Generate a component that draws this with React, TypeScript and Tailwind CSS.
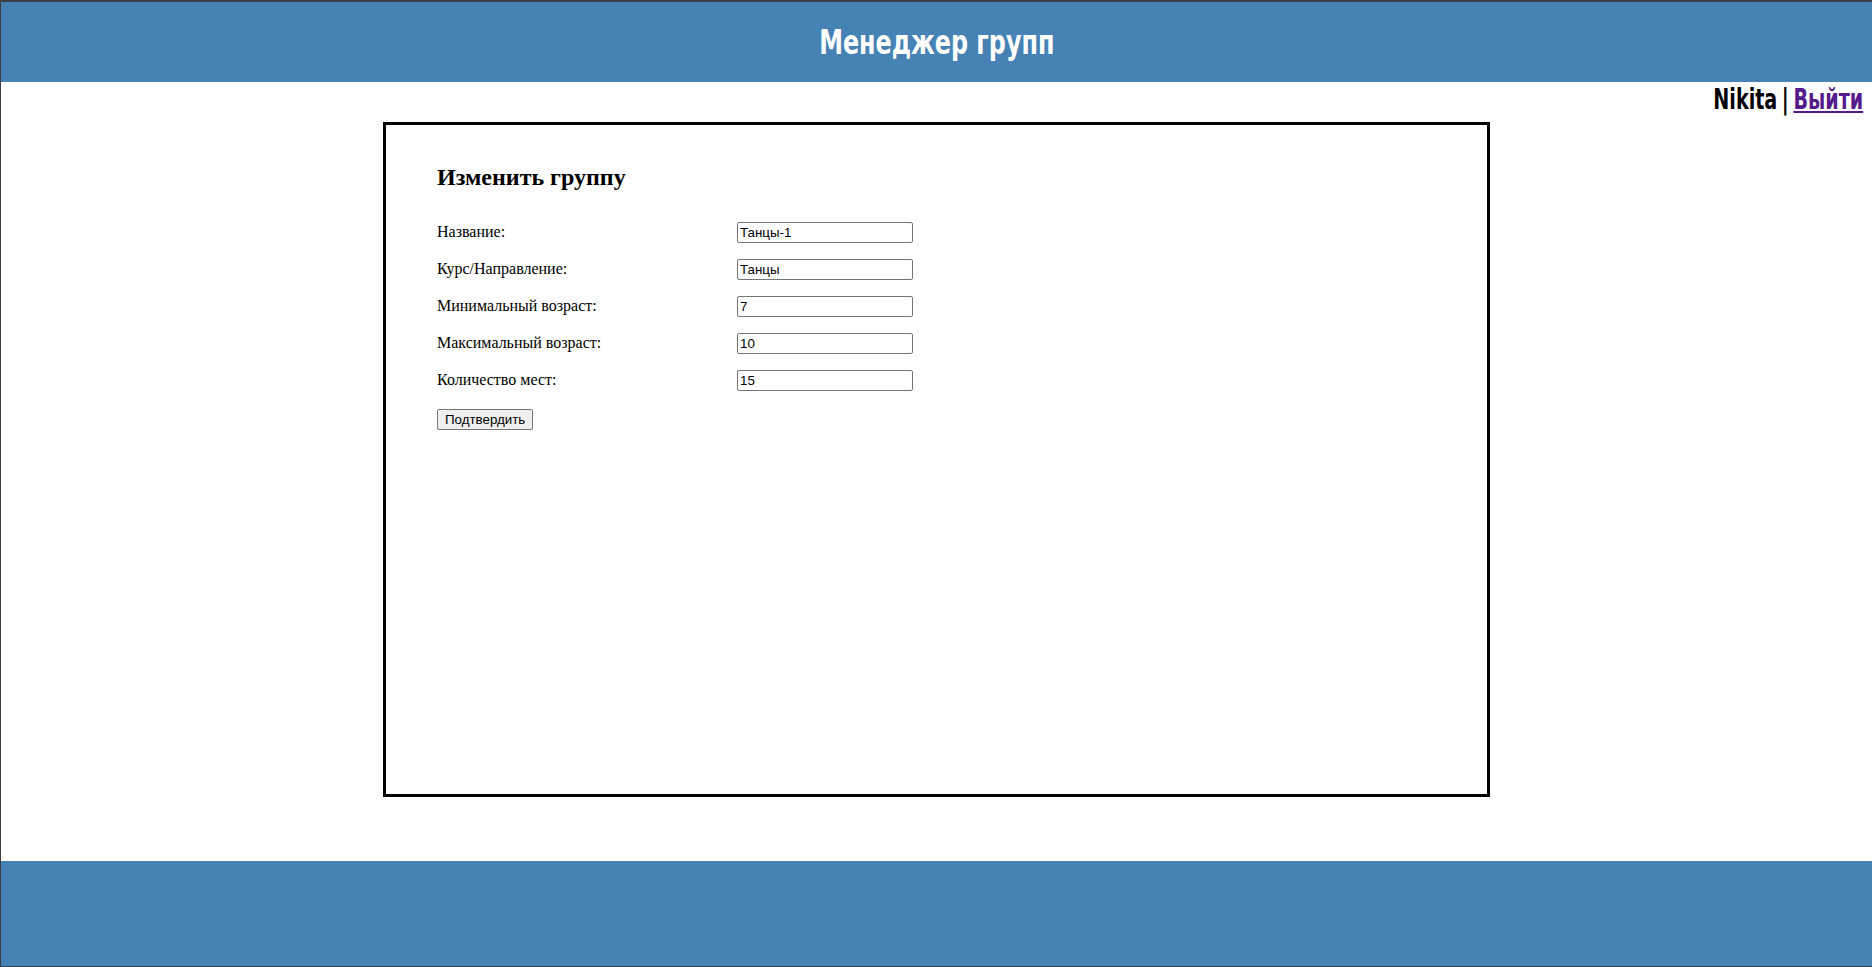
import { useState } from "react";

const fields = [
  { key: "name", label: "Название:", value: "Танцы-1" },
  { key: "course", label: "Курс/Направление:", value: "Танцы" },
  { key: "minAge", label: "Минимальный возраст:", value: "7" },
  { key: "maxAge", label: "Максимальный возраст:", value: "10" },
  { key: "seats", label: "Количество мест:", value: "15" },
];

export default function App() {
  const [values, setValues] = useState<Record<string, string>>(
    Object.fromEntries(fields.map((f) => [f.key, f.value]))
  );

  return (
    <div className="min-h-screen flex flex-col bg-white border-t-2 border-l border-b border-[#3b3e44] font-['Liberation_Serif',serif] text-black">
      <header className="h-[80px] shrink-0 bg-[#4682b4] flex items-center justify-center">
        <h1 className="inline-block scale-x-[0.78] text-[34px] leading-none font-bold text-white font-['DejaVu_Sans_Condensed','DejaVu_Sans',sans-serif]">
          Менеджер групп
        </h1>
      </header>

      <main className="flex-1 flex flex-col">
        <div className="h-[40px] flex justify-end items-start pr-[9px] pt-[2px]">
          <div className="flex origin-right scale-x-[0.76] text-[28px] leading-[32px] font-bold font-['DejaVu_Sans_Condensed','DejaVu_Sans',sans-serif]">
            <span>Nikita</span>
            <span className="mx-[6px]">|</span>
            <a href="#" className="text-[#551a8b] underline">
              Выйти
            </a>
          </div>
        </div>

        <div className="mx-auto w-[1107px] h-[675px] shrink-0 border-[3px] border-black pl-[51px] pt-[38px]">
          <h2 className="text-[24px] leading-[28px] font-bold">Изменить группу</h2>

          <form
            className="mt-[31px] flex flex-col gap-[16px]"
            onSubmit={(e) => e.preventDefault()}
          >
            {fields.map((f) => (
              <div key={f.key} className="flex items-baseline">
                <label className="w-[300px] text-[16px] leading-[18px]">{f.label}</label>
                <input
                  type="text"
                  value={values[f.key]}
                  onChange={(e) => setValues({ ...values, [f.key]: e.target.value })}
                  className="w-[176px] h-[21px] px-[2px] border border-[#767676] rounded-[2px] text-[13.33px] font-['Liberation_Sans',Arial,sans-serif] text-black"
                />
              </div>
            ))}
            <div>
              <button
                type="submit"
                className="h-[21px] px-[7px] border border-[#767676] rounded-[2px] bg-[#efefef] text-[13.33px] font-['Liberation_Sans',Arial,sans-serif] text-black"
              >
                Подтвердить
              </button>
            </div>
          </form>
        </div>
        <div className="h-[64px] shrink-0" />
      </main>

      <footer className="h-[105px] shrink-0 bg-[#4682b4]" />
    </div>
  );
}
